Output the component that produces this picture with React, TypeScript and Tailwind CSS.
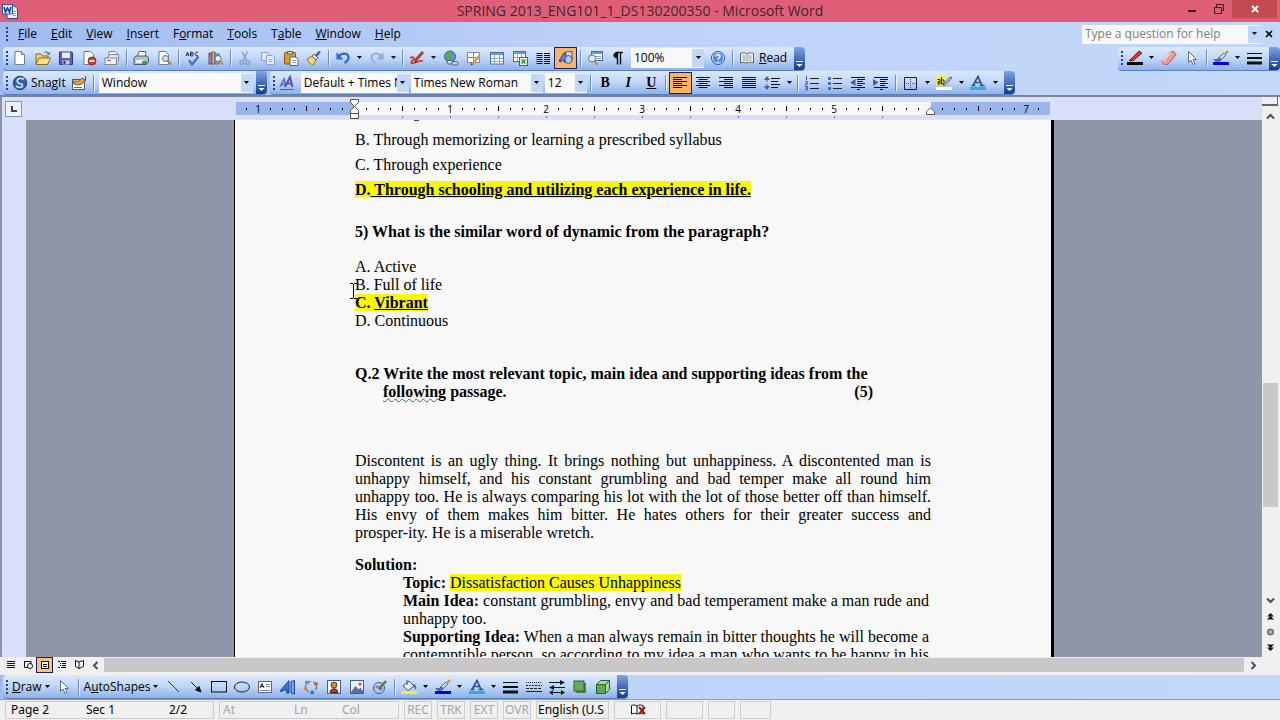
import { ReactNode } from 'react';
import clsx from 'clsx';

/* ---------- icons ---------- */

function Svg(props: { children: ReactNode }) {
  return (
    <svg width="16" height="16" viewBox="0 0 16 16" fill="none" aria-hidden="true" className="shrink-0">
      {props.children}
    </svg>
  );
}

const sheet = <path d="M3 1.5h6.5l3 3v10H3z" fill="#fff" stroke="#6b7a99"/>;

const icons = {
  word: <>
    <path d="M5 3h7.5l3 3v9.5H5z" fill="#eef4ff" stroke="#2b4a8b"/>
    <path d="M11 8.5h3M11 10.5h3M11 12.5h3" stroke="#7f9bd0"/>
    <rect x=".5" y="1.5" width="10" height="9.5" fill="#dfeafc" stroke="#2f5aa8"/>
    <path d="M2 4l1.5 5L5.5 5l2 4L9 4" stroke="#17459e" strokeWidth="1.6"/>
  </>,
  blank: <>{sheet}<path d="M9.5 1.5v3h3" fill="#cdd9ee" stroke="#6b7a99"/></>,
  open: <>
    <path d="M1 14V4h5l1.5 2H13v3" fill="#f6cf62" stroke="#8d6b1e"/>
    <path d="M1 14.5l3-6.5h11.5l-3 6.5z" fill="#ffe48a" stroke="#8d6b1e"/>
    <path d="M9 3c2-2 4-1.5 5 1m1-2l-.8 2.5-2.3-1" stroke="#3c66b0"/>
  </>,
  save: <>
    <path d="M1.5 2h12l1 1v11.5h-13z" fill="#5b5fc0" stroke="#32357c"/>
    <rect x="4" y="2.5" width="8" height="5.5" fill="#e8edfb"/>
    <rect x="4.5" y="10.5" width="7" height="4" fill="#c9cfe8"/><rect x="5.5" y="11" width="2" height="3" fill="#32357c"/>
  </>,
  permission: <>{sheet}<circle cx="11" cy="11" r="4" fill="#d8402c" stroke="#9c2415"/><path d="M8.5 11h5" stroke="#fff" strokeWidth="1.8"/></>,
  mail: <>
    <path d="M5 6V1.5h6l2 2V7" fill="#fff" stroke="#7a859c"/>
    <path d="M3 8l3-3.500h8.5V11" fill="#e3e6ee" stroke="#7a859c"/>
    <rect x="1" y="8" width="11.5" height="6.5" fill="#f3f4f8" stroke="#7a859c"/><path d="M3 10.5h4" stroke="#c0483a"/>
  </>,
  print: <>
    <path d="M4.5 7l1.5-5.5h7L12 7" fill="#fff" stroke="#5d6577"/>
    <path d="M1 8l2-2h11l1.5 2v4l-2 2.5H1z" fill="#b9c0cf" stroke="#525a6c"/>
    <path d="M3 10h8v3H3z" fill="#eef1f6"/><path d="M9 11h5v3H9z" fill="#36a846"/>
  </>,
  preview: <>{sheet}<circle cx="9.5" cy="8.5" r="3" fill="#cfe4fa" stroke="#5a6b88"/><path d="M11.5 10.5l3.5 4" stroke="#b9812d" strokeWidth="2"/></>,
  spelling: <>
    <path d="M1 6l1.5-4L4 6M1.5 4.8h2M5.5 2v4h1.8c1.2 0 1.2-2 0-2H5.5h1.5c1.2 0 1.2-2 0-2zM13 2.7c-1.5-1.5-3 0-3 1.3s1.5 2.8 3 1.3" stroke="#2c3550"/>
    <path d="M4 10l3 4.5 6.5-8" stroke="#3a6fc8" strokeWidth="2.2"/>
  </>,
  research: <>
    <path d="M1 3h3v11H1z" fill="#9a7cc8" stroke="#5c4590"/><path d="M4 2h3v12H4z" fill="#e0b968" stroke="#80622a"/><path d="M7 4h4v10H7z" fill="#86a8dd" stroke="#47659c"/>
    <circle cx="10" cy="8.5" r="3" fill="#e6f1fd" stroke="#5a6b88"/><path d="M12 10.5l3 4" stroke="#c18528" strokeWidth="2"/>
  </>,
  cut: <><path d="M5 1.5l4.5 9M10.5 1.5L6 10.5" stroke="#8798bd" strokeWidth="1.3"/><circle cx="4.8" cy="12.5" r="1.9" stroke="#8798bd" strokeWidth="1.3"/><circle cx="10.8" cy="12.5" r="1.9" stroke="#8798bd" strokeWidth="1.3"/></>,
  copy: <><path d="M1.5 2.5h6l2 2v6h-8z" fill="#dbe5f8" stroke="#8fa2c8"/><path d="M6.5 5.5h6l2 2v7h-8z" fill="#e7eefb" stroke="#8fa2c8"/><path d="M8.5 9.5h4M8.5 11.5h4" stroke="#8fa2c8"/></>,
  paste: <>
    <rect x="1.5" y="2.5" width="11" height="11.5" rx="1" fill="#dd9b2c" stroke="#835412"/><path d="M4.5 1.5h5v2.500h-5z" fill="#d6d9e2" stroke="#5d5d5d"/>
    <path d="M7 7h5.5l2.5 2.5v6H7z" fill="#fff" stroke="#50618a"/><path d="M9 10.5h4M9 12.5h4" stroke="#8c9cc0"/>
  </>,
  painter: <><path d="M1 9l5-3 4 4-3 5c-2-.5-5-3-6-6z" fill="#f6dc63" stroke="#937216"/><path d="M6 6l2-2 4 4-2 2z" fill="#dfe5f0" stroke="#55607b"/><path d="M10 6l4-4.5" stroke="#4a5f9e" strokeWidth="2.6"/></>,
  undo: <><path d="M4 6c3-3.500 8.500-3 9.5.5.5 2.800-1.500 5-4 6.500" stroke="#2f68cf" strokeWidth="2.4"/><path d="M1.500 2v7.500H8.500z" fill="#2f68cf"/></>,
  redo: <><path d="M12 6c-3-3.500-8.500-3-9.500.5-.5 2.800 1.500 5 4 6.500" stroke="#93abda" strokeWidth="2"/><path d="M14.500 2v7.500H7.500z" fill="#93abda"/></>,
  ink: <><path d="M1 8c3-2 5 0 3 2s-3 4 1 3 6-3 9-2" stroke="#d03a28" strokeWidth="1.8"/><path d="M6 11L14 2" stroke="#a8482e" strokeWidth="3"/><path d="M5 13l1.5-3 1.5 1.5z" fill="#333"/></>,
  link: <><circle cx="7" cy="6.5" r="5.5" fill="#5a94de" stroke="#2c5ea3"/><path d="M3 4c2-3 5-2.5 6-1L7 6l2 3-3 2c-2-1-4-4-3-7z" fill="#4fae50"/><rect x="4" y="10.5" width="6" height="3.5" rx="1.7" fill="#cdd6e8" stroke="#4d5e83"/><rect x="9" y="11.5" width="6" height="3.5" rx="1.7" fill="#cdd6e8" stroke="#4d5e83"/></>,
  borders: <><path d="M1.5 2.5h12v10h-12zM7.5 2.5v10M1.5 7.5h12" fill="#fff" stroke="#7486ab"/><path d="M6 14.5L14 5" stroke="#d79c35" strokeWidth="2.6"/><path d="M4.5 15.5l1-2.5 1.5 1.5z" fill="#333"/></>,
  table: <><rect x="1.5" y="2.5" width="13" height="11.5" fill="#fff" stroke="#4b6cae"/><path d="M2 3h12v2H2z" fill="#6f97dd"/><path d="M2 8.5h12M2 11.5h12M5.5 5v9M10.5 5v9" stroke="#8ba6d8"/></>,
  excel: <><rect x="1.5" y="1.5" width="12" height="10" fill="#fff" stroke="#4b6cae"/><path d="M2 2h11v2H2z" fill="#6f97dd"/><path d="M2 7.5h11M5.5 4v7M9.5 4v7" stroke="#8ba6d8"/><rect x="7.5" y="7.5" width="8" height="8" fill="#e5f4e3" stroke="#2f7d36"/><path d="M9.5 9.5l4 4M13.5 9.5l-4 4" stroke="#2f9439" strokeWidth="1.6"/></>,
  columns: <path d="M1.5 3.5h6M1.5 5.5h6M1.5 7.5h6M1.5 9.5h6M1.5 11.5h6M1.5 13.5h6M9 3.5h6M9 5.5h6M9 7.5h6M9 9.5h6M9 11.5h6M9 13.5h6" stroke="#111"/>,
  drawing: <><path d="M7 2l7-.5v9L9 13z" fill="#cfd7ea" stroke="#46598d"/><path d="M1 11l5-8 2 1v8H6v-2H4l-1 2z" fill="#6a82d0" stroke="#2c4089"/><ellipse cx="10.5" cy="9.5" rx="3.5" ry="4" fill="#b9c8ee" stroke="#46598d"/></>,
  docmap: <><rect x="4.5" y="1.5" width="11" height="9" fill="#fff" stroke="#4b6cae"/><path d="M5 2h10v2H5z" fill="#6f97dd"/><path d="M8 6.5h6M8 8.5h6" stroke="#8c9cc0"/><circle cx="5" cy="8.5" r="3.5" fill="#d7ecf5" stroke="#5a7d88"/><path d="M7.5 11l3 4" stroke="#c18528" strokeWidth="2"/></>,
  pilcrow: <><path d="M7.5 2C2 2 2 8.5 7.5 8.5z" fill="#111"/><path d="M7.5 2v12.5M10.5 2v12.5M6 2.5h7" stroke="#111" strokeWidth="1.4"/></>,
  help: <><circle cx="8" cy="8" r="6.5" fill="#4c86de" stroke="#2a58ab"/><circle cx="8" cy="8" r="5.5" stroke="#cfe0fa"/><path d="M6 6.5c0-2.500 4-2.500 4 0 0 1.500-2 1.500-2 3.200M8 11v1.500" stroke="#fff" strokeWidth="1.5"/></>,
  read: <><path d="M8 4C6 2.5 3.5 2.5 1.5 3.5v9.5c2-1 4.5-1 6.5.5 2-1.5 4.500-1.500 6.500-.5V3.500C12.500 2.500 10 2.500 8 4z" fill="#f3f3ee" stroke="#5f6470"/><path d="M8 4v9.5M3.5 6h3M3.5 8h3M3.5 10h3M9.5 6h3M9.5 8h3M9.5 10h3" stroke="#8d929c"/></>,
  redPen: <><path d="M3 10L12 1l3 2-9 8z" fill="#d9382c" stroke="#7c1c14"/><path d="M2 11.5L3 9l2.5 1.5z" fill="#222"/><path d="M0 12h16v3H0z" fill="#000"/></>,
  eraser: <><path d="M1 11.5L9.5 2c2-1.500 5.500.5 5.500 3L7 14c-2.500 1.500-6 0-6-2.500z" fill="#f09a98" stroke="#b35f63"/><path d="M2 11l8-8.5" stroke="#fbd3d0" strokeWidth="1.6"/></>,
  cursor: <path d="M4.5 1.5v11L7 10l2 4.500 2-1L9 9.500h3.500z" fill="#fff" stroke="#5c6a88"/>,
  lineColor: <><path d="M1 9.5c2 1 4 0 5-1.500l2 2c-2 2-5 2-7-.5z" fill="#5c83cf" stroke="#2b4a8b"/><path d="M6 7.5l5-4.500 2 2-5 4.500z" fill="#dbe4f6" stroke="#47598a"/><path d="M11.5 4.5L15 1" stroke="#c79435" strokeWidth="2.4"/><path d="M0 12h16v3H0z" fill="#0000e0"/></>,
  lines: <><path d="M0 3.5h15" stroke="#111"/><path d="M0 8h15" stroke="#111" strokeWidth="2"/><path d="M0 13h15" stroke="#111" strokeWidth="3"/></>,
  snagit: <><circle cx="8" cy="8" r="6.8" fill="#345d9f" stroke="#234477"/><path d="M12 4.5C9 2 4 4 5.5 7s5 1 5 3.500-4 2.500-6.500.5" stroke="#c9dcf6" strokeWidth="1.8"/></>,
  profile: <><rect x="1.5" y="4.5" width="12" height="10" fill="#fff" stroke="#4a5877"/><path d="M3 12.5h8" stroke="#5472b0"/><path d="M2 6h6l3-3 3 2-3 4-4 1-4-1z" fill="#e2a24f" stroke="#8a5b1e"/><path d="M14.5 1v5" stroke="#384f8d"/></>,
  styles: <><path d="M1 12l4-8 2 8M2.5 9.5h4" stroke="#4a72c4" strokeWidth="1.5"/><path d="M6 12l5-10 2.5 10M8 8.5h5" stroke="#5d4fb0" strokeWidth="2"/><path d="M1 14.5h14" stroke="#8a3fa6"/></>,
  alignLeft: <path d="M1 2.5h14M1 4.5h9M1 6.5h14M1 8.5h9M1 10.5h14M1 12.5h9" stroke="#111"/>,
  alignCenter: <path d="M1 2.5h14M3.5 4.5h9M1 6.5h14M3.5 8.5h9M1 10.5h14M3.5 12.5h9" stroke="#111"/>,
  alignRight: <path d="M1 2.5h14M6 4.5h9M1 6.5h14M6 8.5h9M1 10.5h14M6 12.5h9" stroke="#111"/>,
  justify: <path d="M1 2.5h14M1 4.5h14M1 6.5h14M1 8.5h14M1 10.5h14M1 12.5h14" stroke="#111"/>,
  spacing: <><path d="M3 3v10" stroke="#3a62b5" strokeDasharray="4 2"/><path d="M0 5l3-4 3 4zM0 11l3 4 3-4z" fill="#3a62b5"/><path d="M7 3.5h9M7 6.5h7M7 9.5h9M7 12.5h7" stroke="#111"/></>,
  numbering: <><path d="M2.5 1v4M1 6.5h2.5v2H1.5v1.5h2M1 11.5h2.5v3.5H1M1.5 13h2" stroke="#3a62b5"/><path d="M6 3.5h9M6 8.5h9M6 13.5h9" stroke="#222"/></>,
  bullets: <><path d="M1 2h3v3H1zM1 7h3v3H1zM1 12h3v3H1z" fill="#4a6fbf"/><path d="M6 3.5h9M6 8.5h9M6 13.5h9" stroke="#222"/></>,
  outdent: <><path d="M1 2.5h14M7 4.5h8M7 6.5h6M7 8.5h8M7 10.5h5M1 12.5h14M7 14.5h3" stroke="#111"/><path d="M5.5 4v7L0 7.5z" fill="#3a62b5"/></>,
  indent: <><path d="M1 2.5h14M7 4.5h8M7 6.5h6M7 8.5h8M7 10.5h5M1 12.5h14M7 14.5h3" stroke="#111"/><path d="M0 4v7l5.5-3.5z" fill="#3a62b5"/></>,
  outline: <><path d="M2.5 2.5h12v12h-12z" stroke="#222"/><path d="M8.5 4v9M4 8.5h9" stroke="#555" strokeDasharray="1 1"/></>,
  highlight: <><path d="M0 1h9v9H0z" fill="#f7ef4d"/><path d="M1.5 4.5h2.5v4.5H2V6.5h2M5.5 2v7h2.500V5H5.500" stroke="#222"/><path d="M7 10l7-8 2 1-7 7.500z" fill="#c7ccd8" stroke="#505a70"/><path d="M0 12h16v3H0z" fill="#fff"/></>,
  fontColor: <><path d="M3 10.5L8 1.5l4 9M5 7.5h6M1.5 10.5h4M9.5 10.5h5" stroke="#2f519c" strokeWidth="1.7"/><path d="M0 12h16v3H0z" fill="#14b8ea"/></>,
  line: <path d="M3 2l11 11" stroke="#333"/>,
  arrow: <><path d="M3 3l8 8" stroke="#222"/><path d="M13 13L7.5 11l3.500-3.500z" fill="#111" stroke="#111"/></>,
  rect: <rect x=".5" y="2.5" width="15" height="10.5" stroke="#111"/>,
  ellipse: <ellipse cx="8" cy="8" rx="7.5" ry="5" stroke="#222"/>,
  textBox: <><rect x="1.5" y="2.5" width="13" height="11" fill="#fff" stroke="#54678f"/><path d="M3 9l2-4.5L7 9M4 7.5h2" stroke="#222"/><path d="M9 5.5h4M9 7.5h4M3 11.5h10" stroke="#7486ab"/></>,
  wordArt: <><path d="M0 12L9 1.5V14H6.500v-3H4l-1.500 1.500z" fill="#3b71d4" stroke="#1d479b"/><path d="M11 2.500l3.500-1V15L11 14z" fill="#77a3ee" stroke="#1d479b"/></>,
  diagram: <><circle cx="8" cy="8" r="5.5" stroke="#444" strokeDasharray="3 2.5"/><circle cx="4" cy="3.5" r="2" fill="#6a8ad0"/><circle cx="13" cy="5" r="2" fill="#c5654d"/><circle cx="9" cy="13.5" r="2" fill="#4a6fc0"/><circle cx="2.5" cy="9.5" r="2" fill="#cf8a3c"/></>,
  clipArt: <><rect x="1.5" y="1.5" width="13" height="13" fill="#fff" stroke="#4a5d88"/><circle cx="8" cy="6" r="3" fill="#d08a3e" stroke="#66401a"/><path d="M4 13.5c0-5 8-5 8 0z" fill="#a53f2e" stroke="#4a2318"/></>,
  picture: <><rect x="1.5" y="1.5" width="13" height="13" fill="#e9f0fd" stroke="#4a5d88"/><path d="M2 13l4.5-6 3 3.500 2-2L14 12v2H2z" fill="#5b6ea4"/><circle cx="11" cy="5" r="1.5" fill="#d8402c"/></>,
  inkShape: <><circle cx="7" cy="9" r="5.5" fill="#b7c8ea" stroke="#44588c"/><path d="M4 9c1-3 3-2 3 0s2 3 3 0" stroke="#2a4a94"/><path d="M7 10l7-8" stroke="#7c6a45" strokeWidth="2.6"/></>,
  bucket: <><path d="M2 7l6-5 5 5-6 4.500z" fill="#e5ebf8" stroke="#45577f"/><path d="M6 1v5" stroke="#45577f"/><path d="M12 5c3 0 3.500 3 3 6l-2-3z" fill="#3b6cc5"/><path d="M0 12h16v3H0z" fill="#f4f41c"/></>,
  dashes: <><path d="M0 3.5h16" stroke="#222" strokeDasharray="1 1"/><path d="M0 6.5h16" stroke="#222" strokeDasharray="2 1"/><path d="M0 9.5h16" stroke="#222" strokeDasharray="3 1"/><path d="M0 12.5h16" stroke="#222"/></>,
  arrows: <><path d="M0 3.5h13M3 8.5h13M2 13.5h12" stroke="#111"/><path d="M11 1l5 2.500L11 6zM5 6L0 8.500 5 11zM12 11l4 2.500-4 2.500zM4 11l-4 2.500L4 16z" fill="#111"/></>,
  shadow: <><path d="M4 4h10v10H4z" fill="#5b7b5a"/><rect x="2" y="2" width="10" height="10" fill="#66ad5d" stroke="#2b642a"/></>,
  cube: <><path d="M1.5 5.5l4-4h9v9l-4 4h-9z" fill="#a8d59b" stroke="#2b642a"/><path d="M1.5 5.5h9v9h-9z" fill="#5fa655" stroke="#2b642a"/><path d="M10.5 5.5l4-4" stroke="#2b642a"/></>,
  normalView: <path d="M4 4.5h8M4 6.5h8M4 8.5h8M4 10.5h8" stroke="#111"/>,
  webView: <><path d="M4 4.5h7v3M4.500 4.500v6h4" stroke="#111"/><circle cx="10" cy="9" r="2.5" fill="#fff" stroke="#111"/></>,
  printView: <><rect x="4.5" y="4.5" width="7" height="7" fill="#fff" stroke="#111"/><path d="M6 7.500h4M6 9.500h4" stroke="#111"/></>,
  outlineView: <path d="M4 4.5h2M7 4.5h5M6 6.5h1M8 6.5h4M6 8.5h1M8 8.5h4M4 10.5h2M7 10.5h5" stroke="#111"/>,
  readView: <path d="M8 5L4.5 3.5v6L8 11.5l4.500-2v-6zM8 5v6.500" fill="#fff" stroke="#111"/>,
  proof: <><path d="M7 4C5 2.5 3 3 1.5 3.5V12c2-1 4-1 5.500 0 2-1 4-1 6 0V3.500C11 3 9 2.500 7 4zM7 4v8" fill="#fff" stroke="#111"/><path d="M9 5l6 7M15 5l-6 7" stroke="#a01818" strokeWidth="2"/></>,
};

type IconName = keyof typeof icons;

/* ---------- toolbar parts ---------- */

function Tool(props: { icon: IconName, active?: boolean }) {
  return (
    <button
      type="button"
      aria-label={props.icon}
      className={clsx(
        'flex h-[22px] w-[23px] shrink-0 items-center justify-center',
        props.active && 'border border-[#1a1f6b] bg-[#f9b565]',
      )}>
      <Svg>{icons[props.icon]}</Svg>
    </button>
  );
}

function Caret() {
  return (
    <svg width="11" height="6" viewBox="0 0 11 6" className="shrink-0" aria-hidden="true">
      <path d="M3 1h5L5.5 4z" fill="#000"/>
    </svg>
  );
}

function Sep() {
  return (
    <span className="flex w-[6px] shrink-0 justify-center">
      <span className="h-[16px] w-px bg-[#6a8ccb] shadow-[1px_0_#eef4ff]"/>
    </span>
  );
}

function Grip() {
  return (
    <span className="flex w-[5px] shrink-0 flex-col items-end gap-[2px]">
      {[0, 1, 2, 3].map(i => <span key={i} className="h-[2px] w-[2px] bg-[#27418d]"/>)}
    </span>
  );
}

function Cap() {
  return (
    <span className="ml-[3px] flex w-[11px] shrink-0 flex-col items-center justify-end self-stretch rounded-r bg-linear-to-b from-[#7fa4e2] to-[#0f3c93] pb-[2px]">
      <svg width="7" height="7" viewBox="0 0 7 7" aria-hidden="true">
        <path d="M0 .5h7" stroke="#fff"/><path d="M.5 3h6l-3 3z" fill="#fff"/>
      </svg>
    </span>
  );
}

function Bar(props: { children: ReactNode, className?: string }) {
  return (
    <div
      role="toolbar"
      className={clsx(
        'flex h-6 shrink-0 items-center rounded border-b border-[#5b7fbd] bg-linear-to-b from-[#dce9fd] via-[#bfd6f8] to-[#8fb1e8]',
        props.className,
      )}>
      <Grip/>
      {props.children}
      <Cap/>
    </div>
  );
}

function Combo(props: { label: string, value: string, className: string }) {
  return (
    <span className={clsx('ml-[2px] flex h-[20px] shrink-0 items-center bg-[#f8f8f8]', props.className)}>
      <select aria-label={props.label} className="h-full min-w-0 flex-1 appearance-none overflow-hidden pl-[3px] text-clip outline-none">
        <option>{props.value}</option>
      </select>
      <span className="flex h-[18px] w-[12px] items-center justify-center bg-[#c3d8f8]"><Caret/></span>
    </span>
  );
}

function StandardBar() {
  return (
    <Bar className="ml-[3px]">
      <Tool icon="blank"/><Tool icon="open"/><Tool icon="save"/><Tool icon="permission"/><Tool icon="mail"/>
      <Sep/>
      <Tool icon="print"/><Tool icon="preview"/>
      <Sep/>
      <Tool icon="spelling"/><Tool icon="research"/>
      <Sep/>
      <Tool icon="cut"/><Tool icon="copy"/><Tool icon="paste"/><Tool icon="painter"/>
      <Sep/>
      <Tool icon="undo"/><Caret/><Tool icon="redo"/><Caret/>
      <Sep/>
      <Tool icon="ink"/><Caret/><Tool icon="link"/><Tool icon="borders"/><Tool icon="table"/><Tool icon="excel"/><Tool icon="columns"/><Tool icon="drawing" active/>
      <Sep/>
      <Tool icon="docmap"/><Tool icon="pilcrow"/>
      <Combo label="Zoom" value="100%" className="w-[73px]"/>
      <span className="w-[2px]"/>
      <Tool icon="help"/>
      <Sep/>
      <button type="button" className="flex items-center gap-1 px-1">
        <Svg>{icons.read}</Svg>
        <span><u>R</u>ead</span>
      </button>
    </Bar>
  );
}

function SnagitBar() {
  return (
    <Bar className="ml-[3px]">
      <button type="button" className="flex items-center gap-[3px] pl-1">
        <Svg>{icons.snagit}</Svg>
        <span>SnagIt</span>
      </button>
      <span className="w-[2px]"/>
      <Tool icon="profile"/>
      <Sep/>
      <Combo label="Capture" value="Window" className="w-[154px]"/>
    </Bar>
  );
}

function FormattingBar() {
  return (
    <Bar className="ml-[3px]">
      <span className="w-px"/>
      <Tool icon="styles"/>
      <Combo label="Style" value="Default + Times New Roman" className="w-[108px]"/>
      <Combo label="Font" value="Times New Roman" className="w-[132px]"/>
      <Combo label="Font size" value="12" className="w-[42px]"/>
      <span className="w-px"/>
      <Sep/>
      {/* letter buttons keep the width of the icon ones */}
      <button type="button" className="w-[23px] font-[Liberation_Serif,serif] text-[14px] font-bold">B</button>
      <button type="button" className="w-[23px] font-[Liberation_Serif,serif] text-[14px] font-bold italic">I</button>
      <button type="button" className="w-[23px] font-[Liberation_Serif,serif] text-[14px] font-bold underline">U</button>
      <Sep/>
      <Tool icon="alignLeft" active/><Tool icon="alignCenter"/><Tool icon="alignRight"/><Tool icon="justify"/><Tool icon="spacing"/><Caret/>
      <Sep/>
      <Tool icon="numbering"/><Tool icon="bullets"/><Tool icon="outdent"/><Tool icon="indent"/>
      <Sep/>
      <Tool icon="outline"/><Caret/><Tool icon="highlight"/><Caret/><Tool icon="fontColor"/><Caret/>
    </Bar>
  );
}

function InkBar() {
  return (
    <Bar className="ml-auto">
      <Tool icon="redPen"/><Caret/><Tool icon="eraser"/><Tool icon="cursor"/>
      <Sep/>
      <Tool icon="lineColor"/><Caret/><Tool icon="lines"/>
    </Bar>
  );
}

function DrawingBar() {
  return (
    <Bar className="ml-[3px]">
      <button type="button" className="flex items-center pl-1"><span><u>D</u>raw</span><Caret/></button>
      <Tool icon="cursor"/>
      <Sep/>
      <button type="button" className="flex items-center pl-[2px]"><span>A<u>u</u>toShapes</span><Caret/></button>
      <Tool icon="line"/><Tool icon="arrow"/><Tool icon="rect"/><Tool icon="ellipse"/><Tool icon="textBox"/>
      <Tool icon="wordArt"/><Tool icon="diagram"/><Tool icon="clipArt"/><Tool icon="picture"/><Tool icon="inkShape"/>
      <Sep/>
      <Tool icon="bucket"/><Caret/><Tool icon="lineColor"/><Caret/><Tool icon="fontColor"/><Caret/>
      <Tool icon="lines"/><Tool icon="dashes"/><Tool icon="arrows"/><Tool icon="shadow"/><Tool icon="cube"/>
    </Bar>
  );
}

/* ---------- window chrome ---------- */

function TitleBar() {
  return (
    <header className="grid h-[22px] shrink-0 grid-cols-[1fr_auto_1fr] bg-[#e05f78] text-[#47222c]">
      <span className="flex items-center pl-[2px]"><Svg>{icons.word}</Svg></span>
      <h1 className="text-[14px] leading-[22px]">SPRING 2013_ENG101_1_DS130200350 - Microsoft Word</h1>
      <div className="flex items-start justify-end pr-[3px]">
        <button type="button" aria-label="Minimize" className="flex h-[18px] w-[26px] items-center justify-center">
          <svg width="10" height="10" viewBox="0 0 10 10"><path d="M1 7h8" stroke="#3b1a20" strokeWidth="2"/></svg>
        </button>
        <button type="button" aria-label="Restore" className="flex h-[18px] w-[27px] items-center justify-center">
          <svg width="10" height="10" viewBox="0 0 10 10" fill="none" stroke="#3b1a20"><path d="M.5 3.5h7v6h-7zM2.5 3V.5h7v6H8"/></svg>
        </button>
        <button type="button" aria-label="Close" className="flex h-[18px] w-[45px] items-center justify-center bg-[#c34b50]">
          <svg width="8" height="8" viewBox="0 0 8 8"><path d="M1 1l6 6M7 1L1 7" stroke="#fff" strokeWidth="1.8"/></svg>
        </button>
      </div>
    </header>
  );
}

const menus = [
  ['', 'F', 'ile'], ['', 'E', 'dit'], ['', 'V', 'iew'], ['', 'I', 'nsert'], ['F', 'o', 'rmat'],
  ['', 'T', 'ools'], ['T', 'a', 'ble'], ['', 'W', 'indow'], ['', 'H', 'elp'],
];

function MenuBar() {
  return (
    <div className="flex h-6 shrink-0 items-center pl-[3px]">
      <Grip/>
      <nav className="flex gap-[14px] pl-[10px]">
        {menus.map(([before, key, after]) => (
          <a key={key + after} href="#">{before}<u>{key}</u>{after}</a>
        ))}
      </nav>
      <div className="ml-auto flex h-[19px] w-[178px] items-center bg-[#f8f8f8]">
        <input aria-label="Type a question for help" placeholder="Type a question for help" className="min-w-0 flex-1 pl-[3px] outline-none placeholder:text-[#808080]"/>
        <span className="flex h-[17px] w-[12px] items-center justify-center bg-[#c3d8f8]"><Caret/></span>
      </div>
      <button type="button" aria-label="Close document" className="mr-[3px] flex w-[17px] items-center justify-center">
        <svg width="8" height="8" viewBox="0 0 8 8"><path d="M1 1l6 6M7 1L1 7" stroke="#000" strokeWidth="1.6"/></svg>
      </button>
    </div>
  );
}

/* ---------- ruler ---------- */

// one cell per eighth of an inch, k counts eighths from the left margin
function RulerTicks(props: { from: number, to: number }) {
  const cells = Array.from({ length: props.to - props.from + 1 }, (_, i) => props.from + i);
  return cells.map(k => (
    <span key={k} className="flex w-3 shrink-0 items-center justify-center">
      {k % 8 === 0
        ? Math.abs(k / 8)
        : <span className={clsx('w-px bg-black', k % 4 === 0 ? 'h-[5px]' : 'h-[2px]')}/>}
    </span>
  ));
}

function Ruler() {
  return (
    <div className="flex h-[23px] shrink-0 bg-[#d8e0f9]">
      <div className="flex w-6 shrink-0 items-center pl-[3px]">
        <button type="button" aria-label="Tab stop" className="flex h-[16px] w-[17px] items-center justify-center border border-[#7b95cf] bg-[#eef2fd]">
          <svg width="6" height="6" viewBox="0 0 6 6"><path d="M1 0v5h5" fill="none" stroke="#444" strokeWidth="2"/></svg>
        </button>
      </div>
      <div className="mx-auto w-[820px] pt-[5px] pr-1 pl-[2px] text-[10px]">
        <div className="relative flex h-[13px]">
          <div className="flex w-[118px] bg-[#9ab5ec] pl-1"><RulerTicks from={-9} to={-1}/></div>
          <div className="flex w-[577px] bg-[#f8f8f8] pl-[6px]"><RulerTicks from={1} to={47}/></div>
          <div className="flex flex-1 bg-[#9ab5ec] pl-[5px]"><RulerTicks from={49} to={57}/></div>
          <svg width="9" height="21" viewBox="0 0 9 21" className="absolute -top-[3px] left-[114px]" fill="#fff" stroke="#555">
            <path d="M.5.5h8v3l-4 4-4-4zM4.5 7.5l4 4v3h-8v-3zM.5 14.5h8v5h-8z"/>
          </svg>
          <svg width="9" height="8" viewBox="0 0 9 8" className="absolute top-[5px] left-[690px]" fill="#fff" stroke="#555">
            <path d="M4.5.7l4 4v2.800h-8V4.700z"/>
          </svg>
        </div>
        {/* default tab stops */}
        <div className="flex h-[3px] gap-[47px] pt-px pl-[166px]">
          {Array.from({ length: 11 }, (_, i) => <span key={i} className="h-[2px] w-px bg-[#5b6c95]"/>)}
        </div>
      </div>
    </div>
  );
}

/* ---------- document ---------- */

function Mark(props: { children: ReactNode }) {
  return <mark className="bg-[#f7f70a] text-inherit">{props.children}</mark>;
}

// a full line of a justified paragraph
function Line(props: { children: ReactNode }) {
  return <span className="block [text-align-last:justify]">{props.children}</span>;
}

function Page() {
  return (
    <article className="mx-auto w-[820px] border-r-[3px] border-l border-black bg-[#f8f8f8] px-[120px] font-[Liberation_Serif,serif] text-[16px] leading-[18px] whitespace-nowrap text-black">
      <div className="ml-[59px] h-px w-[5px] bg-[#444]"/>
      <p className="pt-[10px]">B. Through memorizing or learning a prescribed syllabus</p>
      <p className="pt-[7px]">C. Through experience</p>
      <p className="pt-[7px] font-bold"><Mark>D.<u> Through schooling and utilizing each experience in life.</u></Mark></p>

      <h2 className="pt-6 font-bold">5) What is the similar word of dynamic from the paragraph?</h2>
      <p className="pt-[17px]">A. Active</p>
      <p>B. Full of life</p>
      <p className="font-bold"><Mark>C. <u>Vibrant</u></Mark></p>
      <p>D. Continuous</p>

      <h2 className="pt-[35px] font-bold">
        Q.2 Write the most relevant topic, main idea and supporting ideas from the
        <span className="flex justify-between pr-[58px] pl-7">
          <span><span className="underline decoration-[#2e7a3c] decoration-wavy decoration-1">following</span> passage.</span>
          <span>(5)</span>
        </span>
      </h2>

      <p className="w-[576px] pt-[51px]">
        <Line>Discontent is an ugly thing. It brings nothing but unhappiness. A discontented man is</Line>
        <Line>unhappy himself, and his constant grumbling and bad temper make all round him</Line>
        <Line>unhappy too. He is always comparing his lot with the lot of those better off than himself.</Line>
        <Line>His envy of them makes him bitter. He hates others for their greater success and</Line>
        prosper-ity. He is a miserable wretch.
      </p>

      <h3 className="pt-[14px] font-bold">Solution:</h3>
      <div className="w-[574px] pl-12">
        <p><b>Topic:</b> <Mark>Dissatisfaction Causes Unhappiness</Mark></p>
        <p>
          <Line><b>Main Idea:</b> constant grumbling, envy and bad temperament make a man rude and</Line>
          unhappy too.
        </p>
        <p>
          <Line><b>Supporting Idea:</b> When a man always remain in bitter thoughts he will become a</Line>
          <Line>contemptible person, so according to my idea a man who wants to be happy in his</Line>
        </p>
      </div>
    </article>
  );
}

function Chevron(props: { className?: string }) {
  return (
    <svg width="9" height="9" viewBox="0 0 9 9" fill="none" stroke="#505050" strokeWidth="2" className={props.className} aria-hidden="true">
      <path d="M1 6.5L4.5 3 8 6.5"/>
    </svg>
  );
}

const views: IconName[] = ['normalView', 'webView', 'printView', 'outlineView', 'readView'];

function BottomScroll() {
  return (
    <div className="flex h-[16px] shrink-0 items-center bg-[#f0f0f0] pl-[2px]">
      {views.map(view => (
        <button
          key={view}
          type="button"
          aria-label={view}
          className={clsx('flex h-[16px] w-[17px] items-center justify-center', view === 'printView' && 'border border-[#1a1f6b] bg-[#f9c080]')}>
          <Svg>{icons[view]}</Svg>
        </button>
      ))}
      <span className="flex w-[17px] justify-center"><Chevron className="-rotate-90"/></span>
      <span className="h-[14px] flex-1 bg-[#c8c8c8]"/>
      <span className="flex w-[18px] justify-center"><Chevron className="rotate-90"/></span>
    </div>
  );
}

function SideScroll() {
  return (
    <div className="flex w-[18px] shrink-0 flex-col items-center bg-[#f0f0f0] pr-[2px]">
      <span className="h-[9px] w-full border-r border-b-2 border-[#666]"/>
      <span className="flex h-[20px] items-center"><Chevron/></span>
      <span className="grow-[257]"/>
      <span className="w-[15px] grow-[124] bg-[#c8c8c8]"/>
      <span className="grow-[85]"/>
      <span className="flex h-[16px] items-center"><Chevron className="rotate-180"/></span>
      <svg width="9" height="48" viewBox="0 0 9 48" aria-hidden="true" className="mb-[17px]">
        <path d="M4.5 5L8 8.5H1zM4.5 8L8 11.5H1z" fill="#111"/>
        <circle cx="4.5" cy="24" r="3" fill="#aaa" stroke="#444"/>
        <path d="M4.5 43L8 39.5H1zM4.5 40L8 36.5H1z" fill="#111"/>
      </svg>
    </div>
  );
}

/* ---------- status bar ---------- */

function StatusBar() {
  const cell = 'flex h-[18px] items-center border border-[#cdcdcd]';
  return (
    <footer className="flex h-[20px] shrink-0 items-center gap-[5px] bg-[#f0f0f0] pl-[5px] font-[Noto_Sans,sans-serif] text-[12px]">
      <div className={clsx(cell, 'w-[209px] pl-[5px] whitespace-pre')}>
        <span className="w-[75px]">Page 2</span>
        <span className="w-[83px]">Sec 1</span>
        <span>2/2</span>
      </div>
      <div className={clsx(cell, 'w-[180px] pl-[3px] text-[#a5a5a5]')}>
        <span className="w-[71px]">At</span>
        <span className="w-[48px]">Ln</span>
        <span>Col</span>
      </div>
      {['REC', 'TRK', 'EXT', 'OVR'].map(mode => (
        <div key={mode} className={clsx(cell, 'w-[28px] justify-center text-[#a5a5a5]')}>{mode}</div>
      ))}
      <div className={clsx(cell, 'w-[73px] pl-px')}>English (U.S</div>
      <div className={clsx(cell, 'w-[47px] justify-center')}><Svg>{icons.proof}</Svg></div>
      <div className={clsx(cell, 'w-[37px]')}/>
      <div className={clsx(cell, 'w-[27px]')}/>
      <div className={clsx(cell, 'w-[31px]')}/>
    </footer>
  );
}

export default function App() {
  return (
    <div className="flex h-screen flex-col overflow-hidden bg-linear-to-r from-[#9fbbf0] via-[#bfd3f9] via-50% to-[#c2d8f9] font-[Open_Sans,sans-serif] text-[12px] leading-4 text-black">
      <TitleBar/>
      <MenuBar/>
      <div className="flex h-[25px] shrink-0 items-center"><StandardBar/><InkBar/></div>
      <div className="flex h-[24px] shrink-0 items-center"><SnagitBar/><FormattingBar/></div>

      <main className="flex min-h-0 flex-1 border-t-2 border-[#7b8396]">
        <div className="flex min-w-0 flex-1 flex-col">
          <div className="flex min-h-0 flex-1 flex-col border-l-2 border-[#8a93a8]">
            <Ruler/>
            <div className="flex min-h-0 flex-1 overflow-hidden bg-[#8f96a8]">
              <div className="w-6 shrink-0 bg-[#d8e0f9]"/>
              <div className="relative flex min-w-0 flex-1">
                <Page/>
                {/* mouse pointer over the text */}
                <svg width="9" height="16" viewBox="0 0 9 16" className="absolute top-[163px] left-[323px]" fill="none" stroke="#000" aria-hidden="true">
                  <path d="M1 .5h3M5 .5h3M4.5 1v14M1 15.5h3M5 15.5h3"/>
                </svg>
              </div>
            </div>
          </div>
          <BottomScroll/>
        </div>
        <SideScroll/>
      </main>

      <div className="flex h-[27px] shrink-0 items-end border-t-2 border-b border-t-[#f0f0f0] border-b-[#8a9cc0]"><DrawingBar/></div>
      <StatusBar/>
    </div>
  );
}
